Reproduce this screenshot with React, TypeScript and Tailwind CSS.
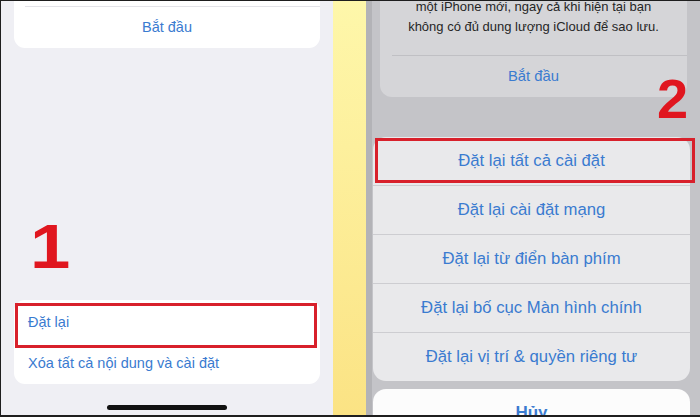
import React from 'react';

const font = { fontFamily: '"Liberation Sans", Arial, sans-serif' };

const sheetRows = [
  'Đặt lại tất cả cài đặt',
  'Đặt lại cài đặt mạng',
  'Đặt lại từ điển bàn phím',
  'Đặt lại bố cục Màn hình chính',
  'Đặt lại vị trí & quyền riêng tư',
];

function LeftScreen() {
  return (
    <div className="relative flex h-full w-[332px] shrink-0 flex-col bg-[#efeff4]">
      {/* card cut at top */}
      <div className="ml-[13px] flex h-[47px] w-[306px] shrink-0 flex-col rounded-b-[11px] bg-white">
        <div className="mt-[5px] ml-[11px] h-px bg-[#e3e3e8]" />
        <div className="flex flex-1 items-center justify-center text-[14.5px] text-[#3a7bd0]">
          Bắt đầu
        </div>
      </div>

      {/* reset card */}
      <div className="mt-[252px] ml-[13px] flex w-[306px] shrink-0 flex-col rounded-[11px] bg-white text-[14.5px] text-[#3a7bd0]">
        <div className="flex h-[43px] items-center pl-[14px] pt-[3px]">Đặt lại</div>
        <div className="flex h-[41px] items-center pl-[14px]">Xóa tất cả nội dung và cài đặt</div>
      </div>

      <div className="mt-[21px] ml-[106px] h-[5px] w-[120px] shrink-0 rounded-full bg-[#111]" />

      {/* annotations */}
      <div className="absolute left-[29px] top-[214px] origin-left scale-x-[1.15] text-[63px] leading-none font-bold text-[#e0161f]">
        1
      </div>
      <div className="absolute left-[14px] top-[302px] h-[45px] w-[302px] border-[3px] border-[#d8202b]" />
    </div>
  );
}

function RightScreen() {
  return (
    <div className="relative flex h-full flex-1 flex-col overflow-hidden border-l-[6px] border-[#b3b3b7] bg-[#c4c4c8]">
      {/* dimmed card behind sheet */}
      <div className="ml-[8px] flex h-[96px] w-[307px] shrink-0 flex-col overflow-hidden rounded-b-[12px] bg-[#d5d5d8]">
        <div className="-mt-[4px] text-center text-[13px] leading-[20px] text-[#262626]">
          <div>một iPhone mới, ngay cả khi hiện tại bạn</div>
          <div>không có đủ dung lượng iCloud để sao lưu.</div>
        </div>
        <div className="mt-[18px] ml-[12px] h-px bg-[#c0c0c4]" />
        <div className="flex flex-1 items-center justify-center text-[14.8px] text-[#3a7bd0]">Bắt đầu</div>
      </div>

      {/* action sheet */}
      <div className="mt-[40px] ml-px w-[317px] shrink-0 overflow-hidden rounded-[13px] bg-[#e9e9eb]">
        {sheetRows.map((row, i) => (
          <div key={row}>
            {i > 0 && <div className="h-px bg-[#cdcdd1]" />}
            <div className="flex h-[48px] items-center justify-center text-[16.7px] text-[#3a7bd0]">{row}</div>
          </div>
        ))}
      </div>

      <div className="mt-[8px] ml-px flex h-[48px] w-[317px] shrink-0 items-center justify-center rounded-[13px] bg-[#fcfcfc] text-[17px] font-bold text-[#3a7bd0]">
        Hủy
      </div>

      {/* annotations */}
      <div className="absolute left-[285px] top-[70px] text-[56px] leading-none font-bold text-[#e0161f]">2</div>
      <div className="absolute left-[3px] top-[137px] h-[45px] w-[320px] border-[3px] border-[#d8202b]" />
    </div>
  );
}

export default function App() {
  return (
    <div
      className="h-[417px] w-[700px] overflow-hidden border-t border-l border-b-2 border-[#1e1e1e] bg-[#1e1e1e]"
      style={font}
    >
      <div className="flex h-full">
        <LeftScreen />
        <div className="h-full w-[33px] shrink-0 bg-gradient-to-b from-[#fef7aa] to-[#fbe384]" />
        <RightScreen />
      </div>
    </div>
  );
}
